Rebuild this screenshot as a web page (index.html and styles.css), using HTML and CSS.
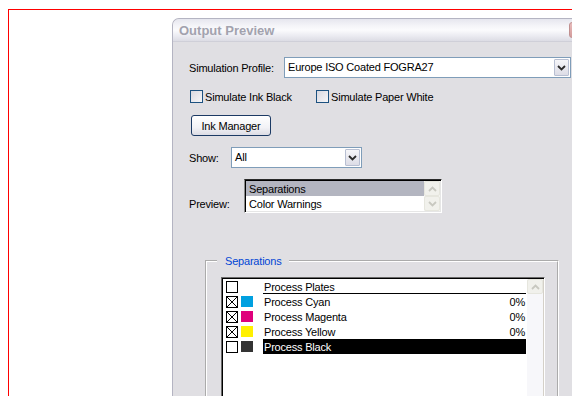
FILE: index.html
```html
<!DOCTYPE html>
<html>
<head>
<meta charset="utf-8">
<link rel="stylesheet" href="styles.css">
</head>
<body>
<div class="frame">
  <div class="dialog">
    <div class="titlebar">
      <span class="title">Output Preview</span>
      <span class="close"></span>
    </div>
    <div class="content">
      <div class="row profile-row">
        <span class="label profile-label">Simulation Profile:</span>
        <div class="combo profile-combo">
          <span class="combo-text">Europe ISO Coated FOGRA27</span>
          <span class="combo-btn"><svg width="9" height="6" viewBox="0 0 9 6"><path d="M1 1 L4.5 4.5 L8 1" fill="none" stroke="#2b2b2b" stroke-width="1.8"/></svg></span>
        </div>
      </div>
      <div class="row check-row">
        <span class="check check-first"><span class="box"></span>Simulate Ink Black</span>
        <span class="check"><span class="box"></span>Simulate Paper White</span>
      </div>
      <div class="row button-row">
        <span class="btn">Ink Manager</span>
      </div>
      <div class="row show-row">
        <span class="label show-label">Show:</span>
        <div class="combo show-combo">
          <span class="combo-text">All</span>
          <span class="combo-btn"><svg width="9" height="6" viewBox="0 0 9 6"><path d="M1 1 L4.5 4.5 L8 1" fill="none" stroke="#2b2b2b" stroke-width="1.8"/></svg></span>
        </div>
      </div>
      <div class="row preview-row">
        <span class="label preview-label">Preview:</span>
        <div class="plist">
          <div class="plist-rows">
            <div class="prow selected">Separations</div>
            <div class="prow">Color Warnings</div>
          </div>
          <div class="pscroll">
            <span class="sbtn"><svg width="9" height="6" viewBox="0 0 9 6"><path d="M1 5 L4.5 1.5 L8 5" fill="none" stroke="#c8c8c0" stroke-width="1.8"/></svg></span>
            <span class="sbtn"><svg width="9" height="6" viewBox="0 0 9 6"><path d="M1 1 L4.5 4.5 L8 1" fill="none" stroke="#c8c8c0" stroke-width="1.8"/></svg></span>
          </div>
        </div>
      </div>
      <fieldset class="group">
        <legend class="group-title">Separations</legend>
        <div class="seplist">
          <div class="sep-rows">
            <div class="srow">
              <span class="cb"></span><span class="swatch none"></span>
              <span class="cell header"><span>Process Plates</span><span></span></span>
            </div>
            <div class="srow">
              <span class="cb checked"><svg width="12" height="12" viewBox="0 0 12 12"><path d="M1 1 L11 11 M11 1 L1 11" stroke="#000" stroke-width="1"/></svg></span><span class="swatch cyan"></span>
              <span class="cell"><span>Process Cyan</span><span>0%</span></span>
            </div>
            <div class="srow">
              <span class="cb checked"><svg width="12" height="12" viewBox="0 0 12 12"><path d="M1 1 L11 11 M11 1 L1 11" stroke="#000" stroke-width="1"/></svg></span><span class="swatch magenta"></span>
              <span class="cell"><span>Process Magenta</span><span>0%</span></span>
            </div>
            <div class="srow">
              <span class="cb checked"><svg width="12" height="12" viewBox="0 0 12 12"><path d="M1 1 L11 11 M11 1 L1 11" stroke="#000" stroke-width="1"/></svg></span><span class="swatch yellow"></span>
              <span class="cell"><span>Process Yellow</span><span>0%</span></span>
            </div>
            <div class="srow">
              <span class="cb"></span><span class="swatch black"></span>
              <span class="cell selected"><span>Process Black</span><span></span></span>
            </div>
          </div>
          <div class="sscroll">
            <span class="sbtn"><svg width="9" height="6" viewBox="0 0 9 6"><path d="M1 5 L4.5 1.5 L8 5" fill="none" stroke="#c8c8c0" stroke-width="1.8"/></svg></span>
          </div>
        </div>
      </fieldset>
    </div>
  </div>
</div>
</body>
</html>
```

FILE: styles.css
```css
html, body {
  margin: 0;
  padding: 0;
  overflow: hidden;
  background: #ffffff;
}

body {
  font-family: "Liberation Sans", Arial, sans-serif;
  font-size: 11px;
  letter-spacing: -0.2px;
  color: #000;
  width: 572px;
  height: 396px;
}

.frame {
  margin: 9px 0 0 8px;
  border-top: 1px solid #ff0000;
  border-left: 1px solid #ff0000;
  width: 564px;
  height: 387px;
  padding: 8px 0 0 163px;
  box-sizing: border-box;
  overflow: hidden;
}

.dialog {
  width: 420px;
  height: 400px;
  background: #e0dfe3;
  border-top: 1px solid #b4b4c2;
  border-left: 1px solid #b4b4c2;
  border-top-left-radius: 7px;
  overflow: hidden;
}

.titlebar {
  height: 22px;
  display: flex;
  align-items: center;
  padding-left: 6px;
  background: linear-gradient(#e6e6ee 0%, #f4f4f8 30%, #fbfbfd 50%, #ececf2 75%, #dcdce4 100%);
  border-bottom: 1px solid #cfcfd8;
}

.title {
  flex: 1;
  font-weight: bold;
  font-size: 13px;
  letter-spacing: 0;
  color: #a2a2ae;
  padding-top: 1px;
}

.close {
  width: 21px;
  height: 16px;
  margin-right: 3px;
  box-sizing: border-box;
  border: 1px solid #c09090;
  border-radius: 3px;
  background: linear-gradient(#e8bcbc, #d49c9c);
}

.content {
  padding: 15px 0 0 16px;
}

.row {
  display: flex;
  align-items: center;
}

.label {
  flex: none;
}

.profile-label { width: 95px; }
.show-label { width: 42px; }
.preview-label { width: 55px; }

.combo {
  display: flex;
  align-items: center;
  height: 21px;
  box-sizing: border-box;
  border: 1px solid #7f9db9;
  background: #fff;
}

.profile-combo { width: 287px; }
.show-combo { width: 131px; }

.combo-text {
  flex: 1;
  padding-left: 3px;
  line-height: 19px;
  white-space: nowrap;
}

.combo-btn {
  width: 15px;
  height: 17px;
  margin: 0 1px 0 0;
  box-sizing: border-box;
  border: 1px solid #b8bfd2;
  border-radius: 1px;
  background: linear-gradient(#f6f6f9, #dcdce6);
  display: flex;
  align-items: center;
  justify-content: center;
}

.check-row {
  margin-top: 12px;
  height: 13px;
}

.check {
  display: flex;
  align-items: center;
  white-space: nowrap;
}

.check-first { width: 126px; }

.box {
  width: 13px;
  height: 13px;
  box-sizing: border-box;
  border: 1px solid #1c5180;
  background: linear-gradient(135deg, #d8d8e0, #f6f6f8);
  margin-left: 1px;
  margin-right: 2px;
}

.button-row {
  margin-top: 12px;
}

.btn {
  margin-left: 2px;
  width: 80px;
  height: 21px;
  box-sizing: border-box;
  border: 1px solid #1c3a64;
  border-radius: 3px;
  background: linear-gradient(#ffffff 0%, #f2f2f6 60%, #dcdce4 100%);
  display: flex;
  align-items: center;
  justify-content: center;
}

.show-row {
  margin-top: 11px;
}

.preview-row {
  margin-top: 11px;
  align-items: flex-end;
}

.preview-label {
  margin-bottom: 3px;
}

.plist {
  width: 198px;
  height: 34px;
  box-sizing: border-box;
  border-style: solid;
  border-width: 1px;
  border-color: #2a2a2a #ffffff #ffffff #8a8a8a;
  box-shadow: inset 1px 1px 0 #000, inset -1px -1px 0 #e6e6e6;
  padding: 1px;
  background: #fff;
  display: flex;
}

.plist-rows {
  flex: 1;
}

.prow {
  height: 15px;
  line-height: 16px;
  padding-left: 3px;
}

.prow.selected {
  background: #b3b5c0;
}

.pscroll {
  width: 16px;
  display: flex;
  flex-direction: column;
  background: #f4f4f2;
}

.sbtn {
  width: 16px;
  height: 15px;
  box-sizing: border-box;
  border: 1px solid #e6e6de;
  border-radius: 2px;
  background: #f1f1ec;
  display: flex;
  align-items: center;
  justify-content: center;
}

.group {
  margin: 41px 0 0 16px;
  width: 354px;
  box-sizing: border-box;
  border: 2px groove #ffffff;
  padding: 9px 12px 0 14px;
  min-width: 0;
}

.group-title {
  color: #0046d5;
  line-height: 14px;
  padding: 0 7px 0 8px;
  margin-left: -4px;
}

.seplist {
  width: 324px;
  height: 140px;
  box-sizing: border-box;
  border-style: solid;
  border-width: 1px;
  border-color: #6a6a6a #ffffff #ffffff #6a6a6a;
  box-shadow: inset 1px 1px 0 #000, inset -1px -1px 0 #d4d0c8;
  padding: 1px;
  background: #fff;
  display: flex;
}

.sep-rows {
  width: 304px;
  padding-right: 1px;
  box-sizing: border-box;
}

.srow {
  display: flex;
  align-items: center;
  height: 15px;
  padding-left: 3px;
}

.cb {
  width: 12px;
  height: 12px;
  box-sizing: border-box;
  border: 1px solid #000;
  background: #fff;
  margin-right: 3px;
  overflow: hidden;
}

.cb svg {
  display: block;
  margin: -1px 0 0 -1px;
}

.swatch {
  width: 12px;
  height: 11px;
  margin-right: 10px;
}

.swatch.none { background: transparent; }
.swatch.cyan { background: #00a0e0; }
.swatch.magenta { background: #df007c; }
.swatch.yellow { background: #fff000; }
.swatch.black { background: #333333; }

.cell {
  flex: 1;
  height: 15px;
  box-sizing: border-box;
  display: flex;
  justify-content: space-between;
  align-items: center;
  padding: 1px 1px 0 1px;
  white-space: nowrap;
}

.cell.header {
  border-bottom: 1px solid #000;
}

.cell.selected {
  background: #000;
  color: #fff;
}

.sscroll {
  width: 16px;
  background: #f7f7fa;
  display: flex;
  flex-direction: column;
}
```
